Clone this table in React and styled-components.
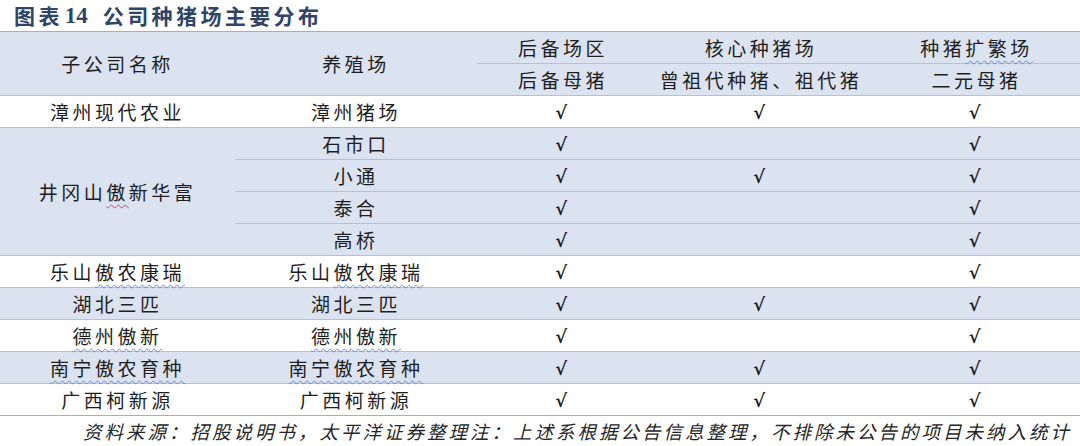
import React from 'react'
import styled, { createGlobalStyle } from 'styled-components'

const GlobalStyle = createGlobalStyle`
  html, body {
    margin: 0;
    padding: 0;
    background: #fff;
  }
  body {
    font-family: "Noto Sans CJK SC", "Noto Sans", sans-serif;
    color: #1e1e1e;
  }
`

const Page = styled.div`
  width: 1080px;
  height: 446px;
  overflow: hidden;
  background: #fff;
`

const Title = styled.h1`
  margin: 0;
  height: 31px;
  padding-left: 14px;
  display: flex;
  align-items: center;
  font-size: 21px;
  font-weight: 600;
  letter-spacing: 3.4px;
  color: #2f4467;
  line-height: 1;

  span {
    font-family: "Liberation Serif", serif;
    font-weight: 700;
    font-size: 23px;
    letter-spacing: 0;
    margin: 0 15px 0 2px;
  }
`

const Table = styled.table`
  width: 1080px;
  border-collapse: collapse;
  table-layout: fixed;
  border-top: 1px solid #a3aec3;
  border-bottom: 1px solid #a3aec3;
`

const Row = styled.tr`
  background: ${(p) => (p.$shaded ? '#dbe2f0' : '#ffffff')};
`

const Cell = styled.td`
  height: 31px;
  padding: 0;
  text-align: center;
  vertical-align: middle;
  font-size: 19px;
  letter-spacing: 3.5px;
  line-height: 1;
  color: #1e1e1e;
  border-top: ${(p) => (p.$noTop ? 'none' : '1px solid #b7c0d2')};
  white-space: nowrap;
`

const Check = styled.span`
  font-family: "DejaVu Serif", "Liberation Serif", serif;
  font-size: 18px;
  font-weight: 700;
  color: #1a1a1a;
`

const Wavy = styled.span`
  text-decoration: underline wavy ${(p) => (p.$red ? '#d04a7a' : '#6a8ad8')};
  text-decoration-thickness: 1px;
  text-underline-offset: 4px;
`

const Note = styled.p`
  margin: 0;
  height: 29px;
  display: flex;
  align-items: center;
  justify-content: flex-end;
  padding-right: 8px;
  font-size: 18.5px;
  font-style: italic;
  letter-spacing: 3px;
  color: #262626;
`

const V = () => <Check>√</Check>

const rows = [
  { shaded: false, company: '漳州现代农业', farm: '漳州猪场', marks: [1, 1, 1] },
  {
    shaded: true,
    company: (
      <>
        井冈山<Wavy $red>傲</Wavy>新华富
      </>
    ),
    group: [
      { farm: '石市口', marks: [1, 0, 1] },
      { farm: '小通', marks: [1, 1, 1] },
      { farm: '泰合', marks: [1, 0, 1] },
      { farm: '高桥', marks: [1, 0, 1] },
    ],
  },
  {
    shaded: false,
    company: (
      <>
        乐山<Wavy>傲农康瑞</Wavy>
      </>
    ),
    farm: (
      <>
        乐山<Wavy>傲农康瑞</Wavy>
      </>
    ),
    marks: [1, 0, 1],
  },
  { shaded: true, company: '湖北三匹', farm: '湖北三匹', marks: [1, 1, 1] },
  {
    shaded: false,
    company: <Wavy>德州傲新</Wavy>,
    farm: <Wavy>德州傲新</Wavy>,
    marks: [1, 0, 1],
  },
  {
    shaded: true,
    company: <Wavy>南宁傲农育种</Wavy>,
    farm: <Wavy>南宁傲农育种</Wavy>,
    marks: [1, 1, 1],
  },
  { shaded: false, company: '广西柯新源', farm: '广西柯新源', marks: [1, 1, 1] },
]

function Marks({ marks }) {
  return marks.map((m, i) => <Cell key={i}>{m ? <V /> : null}</Cell>)
}

export default function App() {
  return (
    <Page>
      <GlobalStyle />
      <Title>
        图表<span>14</span>公司种猪场主要分布
      </Title>
      <Table>
        <colgroup>
          <col style={{ width: 235 }} />
          <col style={{ width: 242 }} />
          <col style={{ width: 172 }} />
          <col style={{ width: 224 }} />
          <col style={{ width: 207 }} />
        </colgroup>
        <thead>
          <Row $shaded>
            <Cell rowSpan={2} $noTop>子公司名称</Cell>
            <Cell rowSpan={2} $noTop>养殖场</Cell>
            <Cell $noTop>后备场区</Cell>
            <Cell $noTop>核心种猪场</Cell>
            <Cell $noTop>
              种猪<Wavy>扩繁场</Wavy>
            </Cell>
          </Row>
          <Row $shaded>
            <Cell>后备母猪</Cell>
            <Cell>曾祖代种猪、祖代猪</Cell>
            <Cell>二元母猪</Cell>
          </Row>
        </thead>
        <tbody>
          {rows.map((r, i) =>
            r.group ? (
              r.group.map((g, j) => (
                <Row key={`${i}-${j}`} $shaded={r.shaded}>
                  {j === 0 && <Cell rowSpan={r.group.length}>{r.company}</Cell>}
                  <Cell>{g.farm}</Cell>
                  <Marks marks={g.marks} />
                </Row>
              ))
            ) : (
              <Row key={i} $shaded={r.shaded}>
                <Cell>{r.company}</Cell>
                <Cell>{r.farm}</Cell>
                <Marks marks={r.marks} />
              </Row>
            )
          )}
        </tbody>
      </Table>
      <Note>资料来源：招股说明书，太平洋证券整理注：上述系根据公告信息整理，不排除未公告的项目未纳入统计</Note>
    </Page>
  )
}
